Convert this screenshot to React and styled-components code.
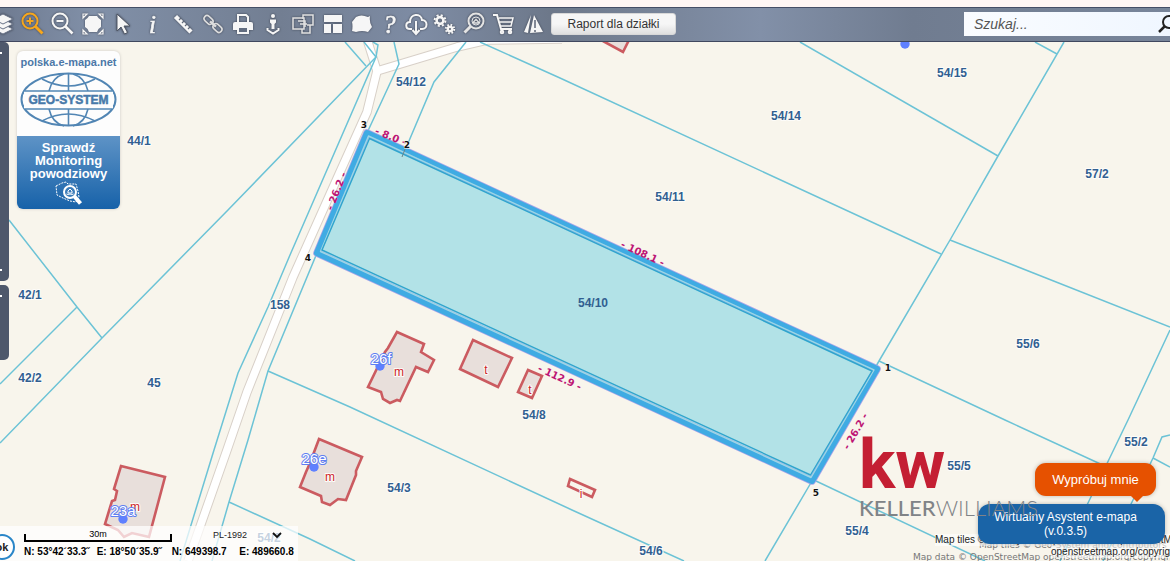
import React from "react";
import styled, { createGlobalStyle } from "styled-components";

const GlobalStyle = createGlobalStyle`
  * {
    box-sizing: border-box;
  }
  body {
    margin: 0;
    background: #fff6f4;
    font-family: "Liberation Sans", Arial, sans-serif;
    overflow: hidden;
  }
`;

const Page = styled.div`
  display: flex;
  flex-direction: column;
  height: 100vh;
  padding-top: 7px;
`;

const Toolbar = styled.header`
  display: flex;
  align-items: center;
  flex: none;
  height: 35px;
  padding-bottom: 2px;
  overflow: hidden;
  border-top: 1px solid #454e66;
  border-bottom: 1px solid #40485f;
  background: linear-gradient(90deg, #6f7b91 0%, #8190a8 8%, #727e92 24%, #7e8ca4 36%, #6d788a 47%, #8290a8 65%, #707c90 78%, #78859a 100%);
`;

const Tools = styled.nav`
  display: flex;
  align-items: center;
  flex: none;
  margin-left: -12px;
`;

const ToolButton = styled.button`
  display: flex;
  align-items: center;
  justify-content: center;
  flex: none;
  width: ${(p) => (p.$narrow ? 27 : 30)}px;
  height: 31px;
  padding: 0;
  border: 0;
  background: none;
  color: ${(p) => (p.$active ? "#f7a71c" : "#f6f6f6")};
  cursor: pointer;
`;

const ToolIcon = styled.svg`
  flex: none;
  width: 24px;
  height: 24px;
  overflow: visible;
  fill: none;
  stroke: currentColor;
  stroke-width: 2;
  filter: drop-shadow(0 0 1px #3c4250);

  text {
    font: italic 25px "Liberation Serif", serif;
    fill: currentColor;
    stroke: currentColor;
    stroke-width: 0.6;
  }
`;

const ReportButton = styled.button`
  flex: none;
  width: 125px;
  height: 22px;
  margin-left: 2px;
  padding: 0;
  border: 1px solid #d8d8d8;
  border-radius: 3px;
  background: linear-gradient(#f6f6f6 50%, #dfdfdf);
  color: #333;
  font: 12px "Liberation Sans", Arial, sans-serif;
`;

const SearchBox = styled.form`
  display: flex;
  align-items: center;
  flex: none;
  width: 218px;
  height: 24px;
  margin-left: auto;
  margin-right: -12px;
  background: linear-gradient(90deg, #fafcff, #eff6ff);
`;

const SearchInput = styled.input`
  flex: 1;
  min-width: 0;
  height: 24px;
  padding: 0 10px;
  border: 0;
  outline: 0;
  background: none;
  font: italic 14px "Liberation Sans", Arial, sans-serif;

  &::placeholder {
    color: #555;
    opacity: 1;
  }
`;

const SearchButton = styled.button`
  display: flex;
  align-items: center;
  width: 25px;
  height: 24px;
  padding: 0;
  border: 0;
  background: none;
`;

const MapArea = styled.main`
  position: relative;
  flex: 1;
  min-height: 0;
  overflow: hidden;
  background: #f8f5ec;
`;

const MapCanvas = styled.svg`
  display: block;
  width: 100%;
  height: 100%;

  .boundary {
    fill: none;
    stroke: #6cc3d6;
    stroke-width: 1.5;
  }
  .casing {
    fill: none;
    stroke: #d8d0c8;
    stroke-width: 9.5;
    stroke-linejoin: round;
  }
  .road {
    fill: none;
    stroke: #fff;
    stroke-width: 7.5;
    stroke-linejoin: round;
  }
  .building {
    fill: #e8dfdb;
    stroke: #cb5b60;
    stroke-width: 2.6;
  }
  text {
    text-anchor: middle;
    paint-order: stroke;
    stroke: #fdfcf9;
    stroke-width: 2px;
    stroke-linejoin: round;
  }
  .plot {
    font: bold 12px "Liberation Sans", Arial, sans-serif;
    fill: #315f91;
  }
  .kind {
    font: 12px "Liberation Sans", Arial, sans-serif;
    fill: #cc2429;
  }
  .house {
    font: 15px "Liberation Sans", Arial, sans-serif;
    fill: #fff;
    stroke: #5f7ff2;
  }
  .distance {
    font: bold 10px "DejaVu Sans", sans-serif;
    fill: #bd1474;
    stroke: none;
  }
  .corner {
    font: bold 9px "DejaVu Sans", sans-serif;
    fill: #111;
    stroke-width: 1px;
  }
`;

const SidePanels = styled.div`
  position: absolute;
  top: 0;
  left: 0;
  display: flex;
  flex-direction: column;
  gap: 4px;
`;

const SidePanel = styled.div`
  display: flex;
  flex-direction: column;
  justify-content: space-between;
  width: 9px;
  height: ${(p) => p.$height}px;
  padding: 10px 0;
  border-radius: 0 5px 5px 0;
  background: #4e586b;

  &::before,
  &::after {
    content: "";
    width: 2px;
    height: 2px;
    background: #fff;
  }
  &::after {
    visibility: ${(p) => (p.$single ? "hidden" : "visible")};
  }
`;

const FloodCard = styled.a`
  position: absolute;
  top: 9px;
  left: 17px;
  display: flex;
  flex-direction: column;
  width: 103px;
  border-radius: 6px;
  overflow: hidden;
  background: #fdfdfd;
  box-shadow: 0 0 3px #c9c7c0;
  text-align: center;
  text-decoration: none;
`;

const CardSite = styled.span`
  padding-top: 4px;
  color: #4c78a8;
  font-size: 11px;
  font-weight: bold;
  line-height: 14px;
`;

const CardBody = styled.span`
  display: flex;
  flex-direction: column;
  align-items: center;
  height: 73px;
  padding-top: 5px;
  background: linear-gradient(#5e93c6, #1762a9);
  color: #fff;
  font-size: 13px;
  font-weight: bold;
  line-height: 13px;
`;

const StatusBar = styled.section`
  position: absolute;
  left: 0;
  bottom: 0;
  display: flex;
  flex-direction: column;
  width: 298px;
  height: 35px;
  padding-left: 24px;
  background: rgba(255, 255, 255, 0.72);
`;

const ScaleRow = styled.div`
  display: flex;
  align-items: center;
  height: 18px;
  font-size: 9px;
`;

const ScaleBar = styled.div`
  width: 148px;
  height: 8px;
  margin-top: 7px;
  border: solid #000;
  border-width: 0 2px 2px;
  text-align: center;
  line-height: 0;
`;

const Projection = styled.select`
  width: 68px;
  height: 16px;
  margin-left: 41px;
  padding: 0;
  border: 0;
  appearance: none;
  background: none;
  color: #222;
  font: 9px "Liberation Sans", Arial, sans-serif;
`;

const SelectWrap = styled.label`
  display: flex;
  align-items: center;

  svg {
    width: 10px;
    height: 8px;
    margin-left: -9px;
    pointer-events: none;
  }
`;

const Coordinates = styled.div`
  display: flex;
  gap: 7px;
  font-size: 10px;
  font-weight: bold;
  line-height: 18px;
  white-space: pre;
`;

const OkButton = styled.button`
  position: absolute;
  left: -11px;
  bottom: 1px;
  width: 26px;
  height: 26px;
  padding: 0;
  border: 2px solid #2a86c8;
  border-radius: 50%;
  background: #fff;
  color: #222;
  font: bold 11px "Liberation Sans", Arial, sans-serif;
`;

const Attribution = styled.div`
  position: absolute;
  left: ${(p) => (p.$back ? "calc(100% - 257px)" : "calc(100% - 235px)")};
  bottom: ${(p) => (p.$back ? -2 : 3)}px;
  color: ${(p) => (p.$back ? "#777" : "#222")};
  font-family: ${(p) => (p.$back ? '"DejaVu Sans"' : '"Liberation Sans"')}, sans-serif;
  font-size: ${(p) => (p.$back ? 9 : 10)}px;
  line-height: 12px;
  white-space: nowrap;
`;

const AttributionLine = styled.div`
  width: max-content;
  margin-left: ${(p) => p.$indent || 0}px;
  background: ${(p) => (p.$plain ? "none" : "rgba(255, 255, 255, 0.6)")};
`;

const Chat = styled.aside`
  position: absolute;
  right: 5px;
  bottom: 17px;
  display: flex;
  flex-direction: column;
  align-items: flex-end;
  gap: 8px;
`;

const TryButton = styled.button`
  position: relative;
  width: 121px;
  height: 33px;
  margin-right: 9px;
  padding: 0;
  border: 0;
  border-radius: 11px;
  background: #e65100;
  color: #fff;
  font: 13px "Liberation Sans", Arial, sans-serif;
  box-shadow: 0 0 4px rgba(0, 0, 0, 0.25);

  &::after {
    content: "";
    position: absolute;
    right: 13px;
    bottom: -6px;
    border: solid transparent;
    border-width: 6px 6px 0;
    border-top-color: #e65100;
  }
`;

const AssistantButton = styled.button`
  width: 187px;
  height: 40px;
  padding: 0 12px 0 0;
  border: 0;
  border-radius: 12px;
  background: #1a64a7;
  color: #fff;
  font: 12px/14px "Liberation Sans", Arial, sans-serif;
  box-shadow: 0 0 4px rgba(0, 0, 0, 0.25);
`;

const Agency = styled.div`
  position: absolute;
  left: calc(100% - 311px);
  bottom: 40px;
  display: flex;
  flex-direction: column;
  color: #808387;
  font: 500 22px/26px Lato, sans-serif;
  pointer-events: none;
`;

const AgencyMark = styled.span`
  color: #c41f33;
  font: bold 68px/60px Roboto, sans-serif;
`;

const AgencyLight = styled.span`
  font-weight: 300;
`;

const gear = (x, y, r) => (
  <g>
    <circle cx={x} cy={y} r={r} strokeWidth="2.6" />
    <circle cx={x} cy={y} r={r + 2} strokeWidth="2" strokeDasharray={`${(r + 2) * 0.393} ${(r + 2) * 0.393}`} />
  </g>
);

const tools = [
  { name: "Warstwy", art: <g fill="currentColor" stroke="#687388" strokeWidth="1"><path d="M12 12l10 5-10 5-10-5z" /><path d="M12 7l10 5-10 5-10-5z" /><path d="M12 2l10 5-10 5-10-5z" /></g> },
  { name: "Powiększ", active: true, art: <g><circle cx="9" cy="9" r="7.5" /><path d="M14.5 14.5l7 7" strokeWidth="3" /><path d="M5.5 9h7M9 5.5v7" /></g> },
  { name: "Pomniejsz", art: <g><circle cx="9" cy="9" r="7.5" /><path d="M14.5 14.5l7 7" strokeWidth="2.6" /><path d="M5.5 9h7" /></g> },
  { name: "Cały zasięg", art: <g fill="currentColor" stroke="none"><path d="M8 4h8l1.500 2 2.500 2v7l-2.500 2-1.500 3H8l-1.500-3L4 15V8l2.500-2z" /><path d="M2 2h4L2 6zM22 2v4l-4-4zM2 22v-4l4 4zM22 22h-4l4-4z" fill="none" stroke="currentColor" strokeWidth="1.2" /></g> },
  { name: "Wskaźnik", art: <path d="M6 2v17l4-4 3.5 7 3-1.5-3.5-6.5h6z" fill="currentColor" stroke="#515866" strokeWidth="1" /> },
  { name: "Informacja", art: <text x="8" y="21">i</text> },
  { name: "Pomiar", art: <g><path d="M4.500 4.500L20 20" strokeWidth="4.5" /><path d="M10 6L8 8M13 9L11 11M16 12L14 14M19 15L17 17" stroke="#5f6878" strokeWidth="1.2" /></g> },
  { name: "Odnośnik", art: <g transform="rotate(42 12 12)" strokeWidth="1.6" stroke="#dedede"><rect x="1" y="9" width="10" height="6" rx="3" /><rect x="13" y="9" width="10" height="6" rx="3" /><path d="M8 12h8" strokeWidth="2.5" /></g> },
  { name: "Drukuj", art: <g><path d="M7 10V3h8l2 2v5" /><path d="M2 12q0-2 2-2h16q2 0 2 2v6H2z" fill="currentColor" stroke="none" /><path d="M7 15h10v6H7z" fill="#626d80" /></g> },
  { name: "Widok ulicy", art: <g fill="currentColor" stroke="none"><circle cx="12" cy="4" r="2" /><path d="M9 7.500h6v3l-1.500 1.500v5h-3v-5L9 10.500z" /><path d="M6.500 16v2l5.500 3.500 5.500-3.500v-2" fill="none" stroke="currentColor" /></g> },
  { name: "Porównaj", art: <g strokeWidth="1.5" stroke="#e2e2e2"><path d="M12 7V3h10v10h-6" /><rect x="2" y="6" width="11" height="11" /><path d="M11 17v4h8v-8M9 12h7M7 9h7v6" /></g> },
  { name: "Układ okien", art: <path d="M3 3h18v7H3zM3 12h7v9H3zM12 12h9v9h-9z" fill="currentColor" stroke="none" /> },
  { name: "Obszar", narrow: true, art: <path d="M6 5q5-3 12 0l2-1q-1 6 2 11l-4 5q-6-2-12 0l-4-1q1-5 0-9z" fill="currentColor" stroke="none" /> },
  { name: "Pomoc", narrow: true, art: <text x="6" y="21">?</text> },
  { name: "Pobierz", narrow: true, art: <g><path d="M8 17H6c-5 0-5-7 0-7 0-9 11-9 12-2 6 0 6 9 0 9h-2" /><path d="M12 9v12M8.5 18l3.5 4 3.5-4" /></g> },
  { name: "Ustawienia", art: <g>{gear(8, 8.5, 3.4)}{gear(18, 17, 2.2)}</g> },
  { name: "Szukaj działki", art: <g stroke="#e4e4e4"><circle cx="14" cy="9" r="7.5" /><path d="M8.5 14.5l-6 6" strokeWidth="3" /><circle cx="14" cy="9" r="4" strokeWidth="1" /><path d="M11.5 10l2.5-2.5 2.5 2.5v1h-5z" strokeWidth="1.3" /></g> },
  { name: "Koszyk", art: <g><path d="M1 3h4l4 14h11" /><path d="M7 6h14l-2 8H9M8 10h12" strokeWidth="1.5" /><circle cx="10" cy="20" r="1.3" /><circle cx="18" cy="20" r="1.3" /></g> },
  { name: "Zgłoś", art: <g fill="currentColor" stroke="none"><path d="M9 3L2 20l4 1zM12 3l9 17-13 1z" /><path d="M13 8v8M13 18v2" stroke="#5d6677" strokeWidth="1.5" /></g> },
];

const roads = [
  "M366 36L377 71L367 112L340 172L293 277L247 392L227 450L188 561",
  "M377 71L457 47L487 40L562 39",
];

const boundaries = [
  "M345 42L366 66",
  "M364 42L376 57L228 210L102 338L0 443",
  "M373 42L378 45L376 57L290 255L268 307L238 373L214 450L180 561",
  "M394 42L399 64L367 133L317 253L268 371L248 440L229 502L212 561",
  "M466 42L434 82L406 148",
  "M480 42L560 78L941 254",
  "M800 42L998 156",
  "M1035 42L1057 54",
  "M1064 42L998 156L950 240L879 361L812 481L765 561",
  "M950 240L1170 327",
  "M879 361L1005 420L1120 473",
  "M1170 330L1128 420L1088 503L1060 561",
  "M1170 435L1162 437L1153 458L1133 500L1103 561",
  "M1153 458L1170 467",
  "M816 481L985 561",
  "M268 371L350 407L572 510L684 561",
  "M229 502L310 539L355 561",
  "M9 220L77 307L102 338",
  "M77 307L0 384",
];

const buildings = [
  "397,332 424,344 421,352 434,360 428,372 416,367 400,401 397,400 390,403 383,399 381,392 368,387 385,352 388,348",
  "473,340 512,358 498,387 460,369",
  "528,370 542,376 532,398 518,392",
  "319,439 362,457 356,471 356,475 346,500 338,499 330,505 322,502 321,496 300,487 306,472 310,463",
  "121,466 165,477 149,537 132,533 124,537 118,530 105,524 112,501 115,500 117,491 114,489",
  "603,41 623,52 631,36",
];

const plots = [
  ["54/12", 411, 86], ["54/15", 952, 77], ["54/14", 786, 120], ["57/2", 1097, 178],
  ["54/11", 670, 201], ["44/1", 139, 145], ["42/1", 30, 299], ["42/2", 30, 382],
  ["158", 280, 309], ["45", 154, 387], ["54/10", 593, 307], ["55/6", 1028, 348],
  ["54/8", 534, 419], ["54/3", 399, 492], ["55/5", 959, 470], ["55/2", 1136, 446],
  ["55/4", 857, 535], ["54/6", 651, 555], ["54/2", 269, 542],
];

const kinds = [["m", 399, 376], ["t", 486, 374], ["t", 530, 394], ["i", 581, 498], ["m", 330, 481], ["m", 135, 511]];
const houses = [["26f", 381, 364], ["26e", 314, 464], ["23a", 123, 516]];
const dots = [[380, 366], [314, 467], [123, 519], [905, 44]];
const distances = [
  ["- 8.0 -", 391, 136, 22], ["- 108.1 -", 643, 253, 25], ["- 112.9 -", 560, 377, 25],
  ["- 26.2 -", 336, 191, -69], ["- 26.2 -", 855, 431, -60],
];
const corners = [["3", 364, 128], ["2", 407, 148], ["4", 308, 261], ["1", 888, 371], ["5", 816, 496]];

const ParcelMap = () => (
  <MapCanvas role="img" aria-label="Mapa działek">
    <g transform="translate(0 -42)">
      {roads.map((d) => <path key={d} className="casing" d={d} />)}
      {roads.map((d) => <path key={d} className="road" d={d} />)}
      {buildings.map((p) => <polygon key={p} className="building" points={p} />)}
      <polygon className="building" points="570,479 595,490 592,497 568,486" style={{ fill: "none" }} />
      {boundaries.map((d) => <path key={d} className="boundary" d={d} />)}
      <g fill="none" strokeLinejoin="round">
        <polygon points="367,133 877,369 812,481 317,253" fill="#b2e2e7" stroke="#a9a4ea" strokeWidth="7.5" />
        <polygon points="367,133 877,369 812,481 317,253" stroke="#3fabe3" strokeWidth="6" />
        <polygon points="368.5,136 874,370 811,477.5 320.5,251.5" stroke="#9ed6e4" strokeWidth="1.4" />
        <polygon points="369.5,138.5 872,371 810.5,475 322,250" stroke="#2fa5cd" strokeWidth="1.4" />
      </g>
      <path d="M407 144l-5 13" stroke="#6c858b" />
      {plots.map(([t, x, y]) => <text key={t} className="plot" x={x} y={y} style={{ stroke: t === "54/10" ? "none" : undefined }}>{t}</text>)}
      {kinds.map(([t, x, y]) => <text key={x} className="kind" x={x} y={y}>{t}</text>)}
      {dots.map(([x, y]) => <circle key={x} cx={x} cy={y} r="4.7" fill="#5f80ff" />)}
      {houses.map(([t, x, y]) => <text key={t} className="house" x={x} y={y}>{t}</text>)}
      {distances.map(([t, x, y, a]) => (
        <text key={x} className="distance" transform={`translate(${x} ${y}) rotate(${a})`} y="4">{t}</text>
      ))}
      {corners.map(([t, x, y]) => <text key={t} className="corner" x={x} y={y}>{t}</text>)}
    </g>
  </MapCanvas>
);

const GlobeLogo = () => (
  <svg width="103" height="67" viewBox="0 0 103 67" fill="none" stroke="#5286b4" strokeWidth="1.6">
    <ellipse cx="51.5" cy="30.5" rx="47" ry="26" strokeWidth="2" />
    <path d="M51.5 5v52M32 22C34 13 40 7 47 5M71 22C69 13 63 7 56 5M32 40c2 9 8 15 15 17M71 40c-2 9-8 15-15 17" />
    <path d="M25 10q26 14 53 0M25 52q26-14 53 0" />
    <path d="M7 22h89v18H7z" fill="#fdfdfd" stroke="none" />
    <path d="M7 22h89M7 40h89" />
    <text x="51.5" y="35" textAnchor="middle" fill="#4779a9" stroke="#4779a9" strokeWidth=".5" fontSize="12" fontWeight="bold">GEO-SYSTEM</text>
  </svg>
);

const PolandLens = () => (
  <svg width="30" height="27" viewBox="0 0 30 27" fill="none" stroke="#fff">
    <path d="M2 6l6-3 4-1 2 2 8 0 2 7 1 6-3 5-6-1-7-3-6-3z" strokeWidth="1" strokeDasharray="2 1" />
    <circle cx="16" cy="12" r="6" strokeWidth="2" fill="#3d7db9" />
    <path d="M20.5 16.5l6 7" strokeWidth="4" />
    <path d="M12.5 14q1.5 1 3.5 0 2 1 3.5 0M14 11l2-2 2 2v2h-4z" />
  </svg>
);

export default () => (
  <Page>
    <GlobalStyle />
    <Toolbar>
      <Tools>
        {tools.map((tool) => (
          <ToolButton key={tool.name} type="button" aria-label={tool.name} $active={tool.active} $narrow={tool.narrow}>
            <ToolIcon viewBox="0 0 24 24">{tool.art}</ToolIcon>
          </ToolButton>
        ))}
      </Tools>
      <ReportButton type="button">Raport dla działki</ReportButton>
      <SearchBox role="search" onSubmit={(e) => e.preventDefault()}>
        <SearchInput aria-label="Szukaj" placeholder="Szukaj..." />
        <SearchButton type="submit" aria-label="Wyszukaj">
          <svg width="20" height="20" viewBox="0 0 20 20" fill="none" stroke="#222">
            <circle cx="12" cy="8" r="6" strokeWidth="2" />
            <path d="M8 12l-6 6" strokeWidth="2.5" />
          </svg>
        </SearchButton>
      </SearchBox>
    </Toolbar>
    <MapArea>
      <ParcelMap />
      <SidePanels>
        <SidePanel $height={239} />
        <SidePanel $height={75} $single />
      </SidePanels>
      <FloodCard href="#monitoring">
        <CardSite>polska.e-mapa.net</CardSite>
        <GlobeLogo />
        <CardBody>
          <span>Sprawdź</span>
          <span>Monitoring</span>
          <span>powodziowy</span>
          <PolandLens />
        </CardBody>
      </FloodCard>
      <StatusBar>
        <ScaleRow>
          <ScaleBar>30m</ScaleBar>
          <SelectWrap>
            <Projection aria-label="Układ współrzędnych" defaultValue="PL-1992">
              <option>PL-1992</option>
            </Projection>
            <svg viewBox="0 0 10 8" fill="none" stroke="#111" strokeWidth="1.8">
              <path d="M1 2l4 4 4-4" />
            </svg>
          </SelectWrap>
        </ScaleRow>
        <Coordinates>
          <span>N: 53°42´33.3˝</span>
          <span>E: 18°50´35.9˝</span>
          <span> N: 649398.7</span>
          <span>  E: 489660.8</span>
        </Coordinates>
      </StatusBar>
      <OkButton type="button">ok</OkButton>
      <Attribution $back>
        <AttributionLine $indent={66} $plain>Map tiles © Geo-System and contributors</AttributionLine>
        <AttributionLine $plain>Map data © OpenStreetMap openstreetmap.org/copyright</AttributionLine>
      </Attribution>
      <Attribution>
        <AttributionLine>Map tiles © Geo-System Sp. z o.o Data OpenStreetMap</AttributionLine>
        <AttributionLine $indent={116}>openstreetmap.org/copyright</AttributionLine>
      </Attribution>
      <Chat>
        <TryButton type="button">Wypróbuj mnie</TryButton>
        <AssistantButton type="button">
          Wirtualny Asystent e-mapa
          <br />
          (v.0.3.5)
        </AssistantButton>
      </Chat>
      <Agency>
        <AgencyMark>kw</AgencyMark>
        <span>KELLER<AgencyLight>WILLIAMS</AgencyLight></span>
      </Agency>
    </MapArea>
  </Page>
);
